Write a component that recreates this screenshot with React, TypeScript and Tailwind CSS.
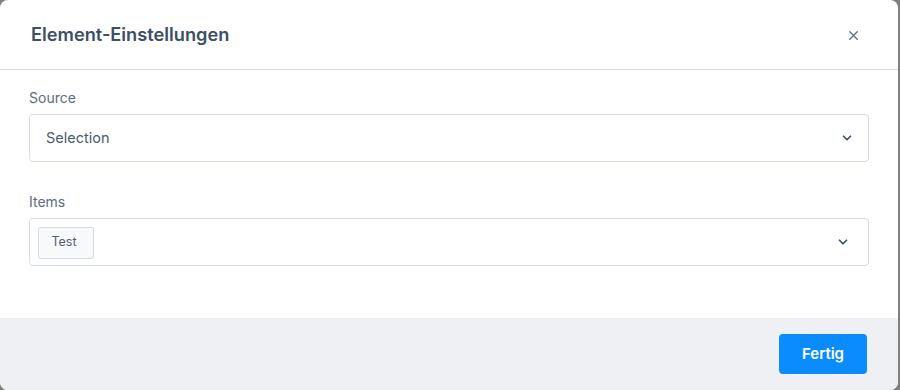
import { ChevronDown, X } from "lucide-react";

interface SelectBoxProps {
  label: string;
  chevronPad: string;
  children: React.ReactNode;
}

function SelectBox({ label, chevronPad, children }: SelectBoxProps) {
  return (
    <div className="flex flex-col">
      <label className="mb-[6px] text-[14px] leading-[20px] text-[#5b6b7e]">
        {label}
      </label>
      <div
        className={`flex h-[48px] items-center justify-between rounded-[4px] border border-[#d3dce4] bg-white ${chevronPad}`}
      >
        {children}
        <ChevronDown className="h-[14px] w-[14px] text-[#3f5269]" strokeWidth={3} />
      </div>
    </div>
  );
}

export default function App() {
  return (
    <div
      className="h-[390px] w-[900px] bg-[#808080]"
      style={{ fontFamily: "Inter, 'Noto Sans', sans-serif" }}
    >
      <div className="flex h-[390px] w-[898px] flex-col overflow-hidden rounded-[8px] bg-white">
        <div className="flex h-[70px] shrink-0 items-center justify-between border-b border-[#d2dae2] pl-[31px] pr-[37px]">
          <h2 className="pt-[1px] text-[18.2px] font-semibold text-[#3c4f64]">
            Element-Einstellungen
          </h2>
          <X className="mt-[2px] h-[15px] w-[15px] text-[#5a6f86]" strokeWidth={2.2} />
        </div>
        <div className="flex flex-1 flex-col gap-[30px] px-[29px] pt-[18px]">
          <SelectBox label="Source" chevronPad="pr-[14px]">
            <span className="pl-[16px] text-[14.5px] text-[#4a5b6d]">Selection</span>
          </SelectBox>
          <SelectBox label="Items" chevronPad="pr-[18px]">
            <div className="pl-[8px] pt-[1px]">
              <span className="flex h-[32px] w-[56px] items-center justify-center pr-[4px] rounded-[2px] border border-[#d3dce4] bg-[#f7f9fb] text-[12.5px] text-[#4f6073]">
                Test
              </span>
            </div>
          </SelectBox>
        </div>
        <div className="flex h-[72px] shrink-0 items-center justify-end bg-[#eff0f4] pr-[31px]">
          <button
            type="button"
            className="h-[40px] w-[88px] rounded-[4px] bg-[#0a8cff] text-[15px] font-semibold text-white"
          >
            Fertig
          </button>
        </div>
      </div>
    </div>
  );
}
